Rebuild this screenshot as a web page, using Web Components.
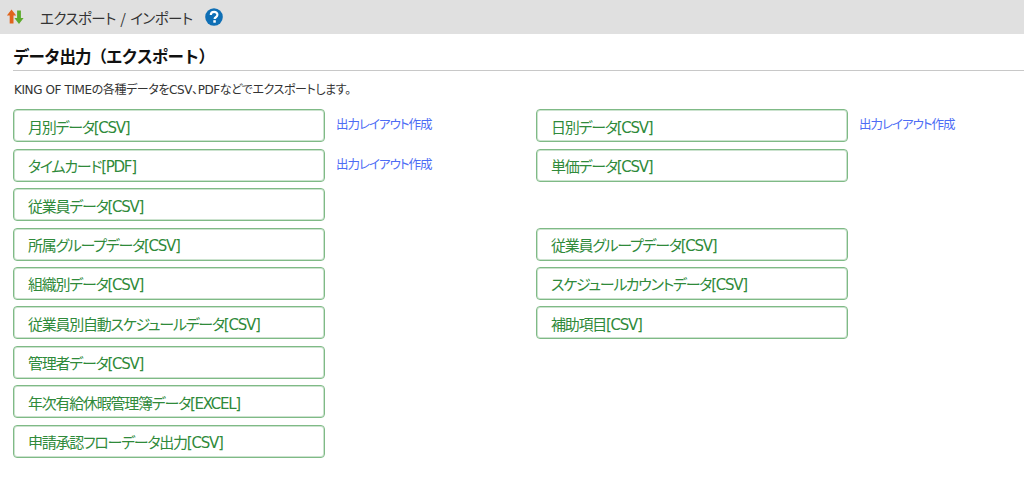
<!DOCTYPE html>
<html lang="ja">
<head>
<meta charset="utf-8">
<title>エクスポート / インポート</title>
<style>
  html, body { margin: 0; background: #fff; }
  body { font-family: "Noto Sans CJK JP", sans-serif; color: #222; overflow: hidden; }
</style>
</head>
<body>
<page-bar>エクスポート / インポート</page-bar>
<section-title>データ出力（エクスポート）</section-title>
<intro-text>KING OF TIMEの各種データをCSV、PDFなどでエクスポートします。</intro-text>
<export-grid>
  <export-button>月別データ[CSV]</export-button>
  <layout-link>出力レイアウト作成</layout-link>
  <export-button>日別データ[CSV]</export-button>
  <layout-link>出力レイアウト作成</layout-link>

  <export-button>タイムカード[PDF]</export-button>
  <layout-link>出力レイアウト作成</layout-link>
  <export-button>単価データ[CSV]</export-button>
  <span></span>

  <export-button>従業員データ[CSV]</export-button>
  <span></span><span></span><span></span>

  <export-button>所属グループデータ[CSV]</export-button>
  <span></span>
  <export-button>従業員グループデータ[CSV]</export-button>
  <span></span>

  <export-button>組織別データ[CSV]</export-button>
  <span></span>
  <export-button>スケジュールカウントデータ[CSV]</export-button>
  <span></span>

  <export-button>従業員別自動スケジュールデータ[CSV]</export-button>
  <span></span>
  <export-button>補助項目[CSV]</export-button>
  <span></span>

  <export-button>管理者データ[CSV]</export-button>
  <span></span><span></span><span></span>

  <export-button>年次有給休暇管理簿データ[EXCEL]</export-button>
  <span></span><span></span><span></span>

  <export-button>申請承認フローデータ出力[CSV]</export-button>
  <span></span><span></span><span></span>
</export-grid>

<script>
function shadowFrom(el, html) {
  el.attachShadow({mode: "open"}).innerHTML = html;
}

class PageBar extends HTMLElement {
  constructor() {
    super();
    shadowFrom(this, `
      <style>
        :host { display: flex; align-items: center; height: 34px; background: #e0e0e0; padding-left: 6px; color: #333; font-size: 14.5px; font-family: "Noto Sans CJK JP", sans-serif; font-feature-settings: "palt"; letter-spacing: -0.55px; word-spacing: 2px; }
        .swap { margin-right: 16px; }
        .help { margin-left: 12px; }
        .label { white-space: nowrap; }
      </style>
      <svg class="swap" width="18" height="18" viewBox="0 0 18 18">
        <path d="M5.5 1.5 L10.2 7.6 H7.5 V15.5 H3.7 V7.6 H0.9 Z" fill="#e0641c"/>
        <path d="M13 16 L8.4 10 H11.1 V2.4 H14.9 V10 H17.6 Z" fill="#5cab2c"/>
      </svg>
      <span class="label"><slot></slot></span>
      <svg class="help" width="18" height="18" viewBox="0 0 18 18">
        <circle cx="9" cy="9" r="8.8" fill="#0f6fb5"/>
        <path d="M5.8 7 C5.8 2.8 12.4 2.8 12.4 6.8 C12.4 9.3 9.6 9.1 9.6 11" fill="none" stroke="#fff" stroke-width="2.2"/>
        <rect x="8.3" y="12.2" width="2.5" height="2.5" fill="#fff"/>
      </svg>`);
  }
}

class SectionTitle extends HTMLElement {
  constructor() {
    super();
    shadowFrom(this, `
      <style>
        :host { display: block; margin: 11px 0 0 13px; padding-bottom: 2px; border-bottom: 1px solid #c8c8c8; font: bold 16.5px/23px "Noto Sans CJK JP", sans-serif; letter-spacing: -1px; color: #111; }
      </style>
      <slot></slot>`);
  }
}

class IntroText extends HTMLElement {
  constructor() {
    super();
    shadowFrom(this, `
      <style>
        :host { display: block; margin: 11px 0 10.2px 14px; font: 12px/17px "DejaVu Sans", "Noto Sans CJK JP", sans-serif; font-feature-settings: "palt"; letter-spacing: -0.4px; color: #333; white-space: nowrap; }
      </style>
      <slot></slot>`);
  }
}

class ExportGrid extends HTMLElement {
  constructor() {
    super();
    shadowFrom(this, `
      <style>
        :host { display: grid; grid-template-columns: 312px 211px 312px auto; grid-auto-rows: 33px; row-gap: 6.45px; padding-left: 13px; }
      </style>
      <slot></slot>`);
  }
}

class ExportButton extends HTMLElement {
  constructor() {
    super();
    shadowFrom(this, `
      <style>
        :host { display: flex; align-items: center; box-sizing: border-box; height: 33px; padding: 1px 0 0 14px; background: #fff; border: 1px solid #7fba86; border-radius: 4px; box-shadow: inset 0 0 0 1px rgba(127,186,134,.4); color: #2f8a3a; font: 15px "DejaVu Sans", "Noto Sans CJK JP", sans-serif; font-feature-settings: "palt"; letter-spacing: -1.25px; white-space: nowrap; cursor: pointer; }
      </style>
      <slot></slot>`);
  }
}

class LayoutLink extends HTMLElement {
  constructor() {
    super();
    shadowFrom(this, `
      <style>
        :host { display: block; padding: 7px 0 0 11px; color: #4d6cf5; font: 12.5px/15px "Noto Sans CJK JP", sans-serif; font-feature-settings: "palt"; letter-spacing: -1px; white-space: nowrap; cursor: pointer; }
      </style>
      <slot></slot>`);
  }
}

customElements.define("page-bar", PageBar);
customElements.define("section-title", SectionTitle);
customElements.define("intro-text", IntroText);
customElements.define("export-grid", ExportGrid);
customElements.define("export-button", ExportButton);
customElements.define("layout-link", LayoutLink);
</script>
</body>
</html>
